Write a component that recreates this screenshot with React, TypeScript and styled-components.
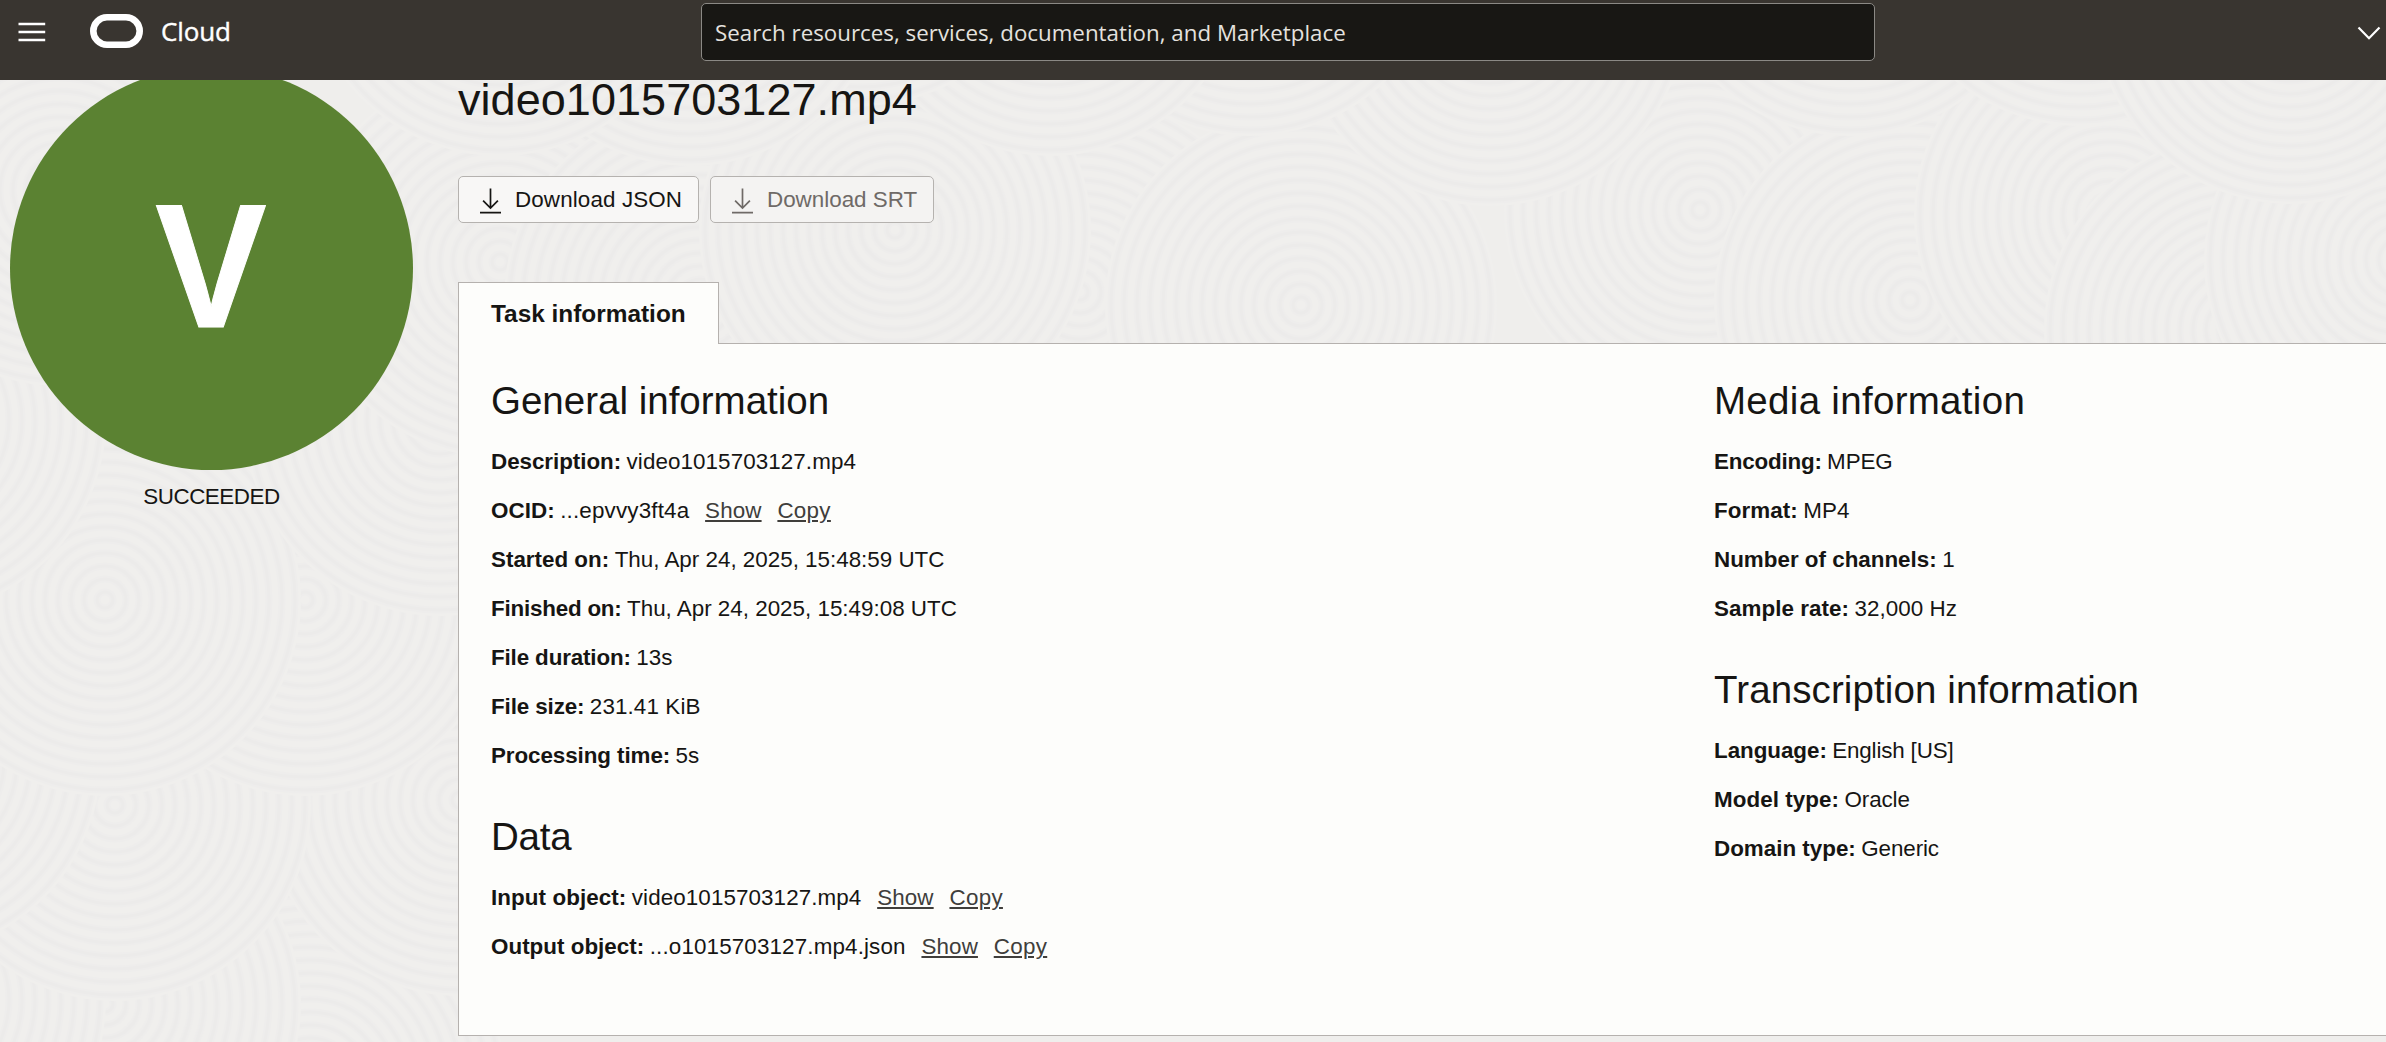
import React from "react";
import styled, { createGlobalStyle } from "styled-components";

const sans = `"Liberation Sans", "Helvetica Neue", Arial, sans-serif`;
const brandSans = `"Open Sans", "Noto Sans", sans-serif`;

const GlobalStyle = createGlobalStyle`
  *, *::before, *::after { box-sizing: border-box; }
  html, body { margin: 0; padding: 0; }
  body {
    background: #f0efed;
    color: #161513;
    font-family: ${sans};
    overflow: hidden;
  }
`;

const Page = styled.div`
  position: relative;
  display: flex;
  flex-direction: column;
  width: 100%;
  height: 100vh;
  overflow: hidden;
`;

const Backdrop = styled.svg`
  position: absolute;
  inset: 0;
  width: 2386px;
  height: 1042px;
`;

/* ---------- Header ---------- */

const Header = styled.header`
  position: relative;
  z-index: 2;
  flex: none;
  display: flex;
  align-items: flex-start;
  height: 80px;
  background: #393530;
  color: #fff;
`;

const MenuButton = styled.button`
  display: flex;
  padding: 0;
  margin: 22px 0 0 18px;
  border: 0;
  background: none;
  color: inherit;
`;

const Brand = styled.div`
  display: flex;
  align-items: center;
  gap: 18px;
  width: 611px;
  height: 34px;
  margin: 14px 0 0 44px;
`;

const BrandName = styled.span`
  font: 500 26px/34px ${brandSans};
  letter-spacing: -0.13px;
  -webkit-text-stroke: 0.4px currentColor;
`;

const Search = styled.div`
  display: flex;
  align-items: center;
  width: 1174px;
  height: 58px;
  margin-top: 3px;
  padding: 2px 13px 0;
  border: 1px solid #8b8985;
  border-radius: 5px;
  background: #181714;
  color: #e4e2df;
  font: 22.3px/30px ${brandSans};
  letter-spacing: 0.02px;
`;

const RegionToggle = styled.button`
  display: flex;
  margin: 26px 5px 0 auto;
  padding: 0;
  border: 0;
  background: none;
  color: inherit;
`;

/* ---------- Layout ---------- */

const Content = styled.div`
  position: relative;
  flex: none;
  display: flex;
  align-items: flex-start;
  margin-top: -13px;
`;

const Side = styled.aside`
  flex: none;
  display: flex;
  flex-direction: column;
  align-items: center;
  width: 448px;
  padding-right: 25px;
`;

const StatusBadge = styled.div`
  display: flex;
  align-items: center;
  justify-content: center;
  width: 403px;
  height: 403px;
  padding-bottom: 6px;
  border-radius: 50%;
  background: #5b8232;
  color: #fff;
`;

const BadgeLetter = styled.span`
  font: bold 177px/200px ${sans};
  transform: scaleX(0.943);
  -webkit-text-stroke: 1px currentColor;
`;

const StatusText = styled.div`
  margin-top: 12px;
  font-size: 22.4px;
  line-height: 30px;
  letter-spacing: -0.45px;
`;

const Main = styled.main`
  flex: 1;
  display: flex;
  flex-direction: column;
  align-items: flex-start;
  min-width: 0;
  padding: 8px 0 0 10px;
`;

const Title = styled.h1`
  margin: 0;
  font-size: 45px;
  font-weight: 400;
  line-height: 50px;
  letter-spacing: 0.05px;
`;

const Actions = styled.div`
  display: flex;
  gap: 11px;
  margin-top: 51px;
`;

const ActionButton = styled.button<{ $muted?: boolean; $track: number; $width: number }>`
  display: flex;
  align-items: center;
  width: ${(p) => p.$width}px;
  height: 47px;
  padding: 0 0 0 20px;
  gap: 12px;
  border: 1px solid #b5b2af;
  border-radius: 5px;
  background: ${(p) => (p.$muted ? "#f4f3f2" : "#f8f7f6")};
  color: ${(p) => (p.$muted ? "#6f6a67" : "#161513")};
  font: 22.4px/30px ${sans};
  letter-spacing: ${(p) => p.$track}px;
  white-space: nowrap;
`;

const Tab = styled.div`
  position: relative;
  z-index: 1;
  display: flex;
  align-items: center;
  width: 261px;
  height: 62px;
  margin: 59px 0 -1px;
  padding: 1px 0 0 32px;
  border: 1px solid #b5b1ae;
  border-bottom: 0;
  background: #fdfdfb;
  font-size: 24.4px;
  font-weight: 700;
  white-space: nowrap;
`;

const Panel = styled.section`
  display: grid;
  grid-template-columns: 1223px 1fr;
  width: 1960px;
  height: 693px;
  padding: 34px 0 0 32px;
  border: 1px solid #b5b1ae;
  background: #fdfdfb;
`;

const Column = styled.div`
  display: flex;
  flex-direction: column;
  gap: 34px;
`;

const Heading = styled.h2<{ $track: number }>`
  margin: 0 0 13px;
  font-size: 38.5px;
  font-weight: 400;
  line-height: 46px;
  letter-spacing: ${(p) => p.$track}px;
`;

const Row = styled.div`
  height: 49px;
  font-size: 22.4px;
  line-height: 49px;
  white-space: nowrap;
`;

const Label = styled.strong<{ $track: number }>`
  letter-spacing: ${(p) => p.$track}px;
`;

const Value = styled.span<{ $track: number }>`
  margin-left: -0.8px;
  letter-spacing: ${(p) => p.$track}px;
`;

const Link = styled.a<{ $track: number }>`
  margin-left: 15.8px;
  color: #403e3b;
  letter-spacing: ${(p) => p.$track}px;
  text-decoration: underline;
  text-decoration-thickness: 2px;
  text-underline-offset: 2px;
`;

/* ---------- Icons ---------- */

const MenuIcon = () => (
  <svg width="28" height="21" viewBox="0 0 28 21" fill="none" stroke="currentColor" strokeWidth="2.4">
    <path d="M0.5 2H27.2M0.5 10H27.2M0.5 18H27.2" />
  </svg>
);

const LogoMark = () => (
  <svg width="53" height="34" viewBox="0 0 53 34" fill="none" stroke="currentColor" strokeWidth="6.6">
    <rect x="3.3" y="3.3" width="46.4" height="27.4" rx="13.7" />
  </svg>
);

const ChevronIcon = () => (
  <svg width="24" height="15" viewBox="0 0 24 15" fill="none" stroke="currentColor" strokeWidth="2.2">
    <path d="M1.5 1.6L12 12.2L22.5 1.6" />
  </svg>
);

const DownloadIcon = () => (
  <svg width="24" height="28" viewBox="0 0 24 28" fill="none" stroke="currentColor" strokeWidth="1.7">
    <path d="M11.5 2.5V21.5M4.1 14.7L11.5 22.1L18.9 14.7M1 26.6H22" />
  </svg>
);

/* ---------- Background relief ---------- */

const DISC_CENTERS: [number, number][] = [
  [310, 1085], [105, 1004], [-90, 1000], [460, 800], [115, 805], [-95, 760],
  [305, 600], [105, 600], [-90, 420], [440, 420],
  [500, 262], [700, 300], [1080, 292], [895, 230], [1301, 305], [1700, 210], [1910, 300],
  [2110, 215], [2240, 330], [2400, 260], [1490, 10], [1250, -60], [1050, -40],
  [860, -90], [690, -30], [500, -40], [60, 190], [1850, -60], [2080, -70], [2290, 8],
];
const RINGS = Array.from({ length: 15 }, (_, i) => 8 + i * 13);

const Relief = () => (
  <Backdrop viewBox="0 0 2386 1042" aria-hidden="true">
    <defs>
      <g id="disc">
        <circle r="196" fill="#f0efed" />
        <g fill="none" stroke="#eeedec" strokeWidth="7">
          {RINGS.map((r) => <circle key={r} r={r} />)}
        </g>
        <g fill="none" stroke="#ecebea" strokeWidth="3">
          {RINGS.map((r) => <circle key={r} r={r} />)}
        </g>
      </g>
    </defs>
    <rect width="2386" height="1042" fill="#efeeec" />
    {DISC_CENTERS.map(([x, y]) => <use key={`${x},${y}`} href="#disc" x={x} y={y} />)}
  </Backdrop>
);

/* ---------- Data ---------- */

type Detail = { label: string; value: string; lt?: number; vt?: number; links?: boolean };
type Group = { title: string; track: number; rows: Detail[] };

const LEFT: Group[] = [
  {
    title: "General information",
    track: 0,
    rows: [
      { label: "Description:", value: "video1015703127.mp4", lt: -0.04, vt: 0.08 },
      { label: "OCID:", value: "...epvvy3ft4a", lt: 0.05, vt: 0.17, links: true },
      { label: "Started on:", value: "Thu, Apr 24, 2025, 15:48:59 UTC", vt: 0 },
      { label: "Finished on:", value: "Thu, Apr 24, 2025, 15:49:08 UTC", lt: -0.21, vt: 0 },
      { label: "File duration:", value: "13s", lt: -0.14 },
      { label: "File size:", value: "231.41 KiB", lt: -0.12, vt: 0.12 },
      { label: "Processing time:", value: "5s", lt: -0.08 },
    ],
  },
  {
    title: "Data",
    track: -0.2,
    rows: [
      { label: "Input object:", value: "video1015703127.mp4", lt: 0.08, vt: 0.09, links: true },
      { label: "Output object:", value: "...o1015703127.mp4.json", lt: 0.02, vt: 0.14, links: true },
    ],
  },
];

const RIGHT: Group[] = [
  {
    title: "Media information",
    track: 0.3,
    rows: [
      { label: "Encoding:", value: "MPEG", lt: -0.2, vt: -0.1 },
      { label: "Format:", value: "MP4", lt: 0.07, vt: 0.1 },
      { label: "Number of channels:", value: "1" },
      { label: "Sample rate:", value: "32,000 Hz", lt: 0.05, vt: 0.04 },
    ],
  },
  {
    title: "Transcription information",
    track: 0.11,
    rows: [
      { label: "Language:", value: "English [US]", lt: -0.04, vt: -0.17 },
      { label: "Model type:", value: "Oracle", lt: 0.06, vt: -0.1 },
      { label: "Domain type:", value: "Generic", lt: 0, vt: -0.1 },
    ],
  },
];

const DetailGroup = ({ title, track, rows }: Group) => (
  <div>
    <Heading $track={track}>{title}</Heading>
    {rows.map((row) => (
      <Row key={row.label}>
        <Label $track={row.lt ?? 0}>{row.label}</Label>{" "}
        <Value $track={row.vt ?? 0}>{row.value}</Value>
        {row.links && (
          <>
            <Link $track={0.12}>Show</Link>
            <Link $track={0.3}>Copy</Link>
          </>
        )}
      </Row>
    ))}
  </div>
);

export default function App() {
  return (
    <Page>
      <GlobalStyle />
      <Relief />
      <Header>
        <MenuButton aria-label="Menu"><MenuIcon /></MenuButton>
        <Brand>
          <LogoMark />
          <BrandName>Cloud</BrandName>
        </Brand>
        <Search>Search resources, services, documentation, and Marketplace</Search>
        <RegionToggle aria-label="Region"><ChevronIcon /></RegionToggle>
      </Header>
      <Content>
        <Side>
          <StatusBadge><BadgeLetter>V</BadgeLetter></StatusBadge>
          <StatusText>SUCCEEDED</StatusText>
        </Side>
        <Main>
          <Title>video1015703127.mp4</Title>
          <Actions>
            <ActionButton $width={241} $track={0.12}>
              <DownloadIcon />
              Download JSON
            </ActionButton>
            <ActionButton $width={224} $track={0} $muted>
              <DownloadIcon />
              Download SRT
            </ActionButton>
          </Actions>
          <Tab>Task information</Tab>
          <Panel>
            <Column>{LEFT.map((g) => <DetailGroup key={g.title} {...g} />)}</Column>
            <Column>{RIGHT.map((g) => <DetailGroup key={g.title} {...g} />)}</Column>
          </Panel>
        </Main>
      </Content>
    </Page>
  );
}
